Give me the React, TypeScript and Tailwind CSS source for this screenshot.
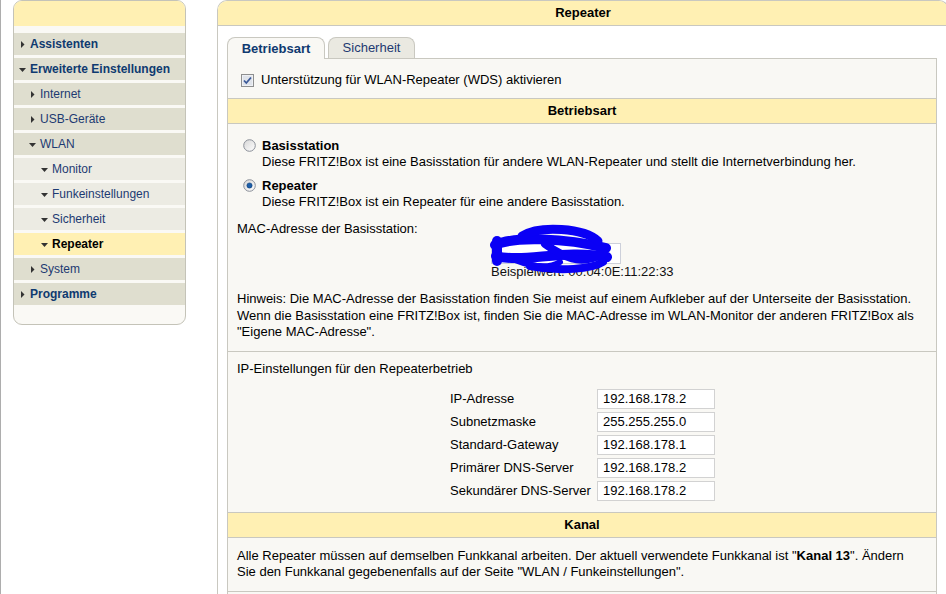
import React from 'react';

type MenuItem = { label: string; level: 1 | 2 | 3; open: boolean; active?: boolean };

const menu: MenuItem[] = [
  { label: 'Assistenten', level: 1, open: false },
  { label: 'Erweiterte Einstellungen', level: 1, open: true },
  { label: 'Internet', level: 2, open: false },
  { label: 'USB-Geräte', level: 2, open: false },
  { label: 'WLAN', level: 2, open: true },
  { label: 'Monitor', level: 3, open: true },
  { label: 'Funkeinstellungen', level: 3, open: true },
  { label: 'Sicherheit', level: 3, open: true },
  { label: 'Repeater', level: 3, open: true, active: true },
  { label: 'System', level: 2, open: false },
  { label: 'Programme', level: 1, open: false },
];

const ipRows = [
  ['IP-Adresse', '192.168.178.2'],
  ['Subnetzmaske', '255.255.255.0'],
  ['Standard-Gateway', '192.168.178.1'],
  ['Primärer DNS-Server', '192.168.178.2'],
  ['Sekundärer DNS-Server', '192.168.178.2'],
];

function Arrow({ open }: { open: boolean }) {
  return (
    <svg width="7" height="7" viewBox="0 0 7 7" className="shrink-0">
      {open ? <path d="M0 2 L7 2 L3.5 6 Z" fill="#333" /> : <path d="M2 0 L5.5 3.5 L2 7 Z" fill="#333" />}
    </svg>
  );
}

function Radio({ checked }: { checked: boolean }) {
  return (
    <svg width="13" height="13" viewBox="0 0 13 13" className="shrink-0">
      <defs>
        <linearGradient id={checked ? 'rg1' : 'rg0'} x1="0" y1="0" x2="1" y2="1">
          <stop offset="0" stopColor="#d6d6d6" />
          <stop offset="1" stopColor="#ffffff" />
        </linearGradient>
      </defs>
      <circle cx="6.5" cy="6.5" r="5.8" fill={`url(#${checked ? 'rg1' : 'rg0'})`} stroke="#8a8f98" strokeWidth="1" />
      {checked && <circle cx="6.5" cy="6.5" r="2.6" fill="#1d5fa8" stroke="#0c3d78" strokeWidth="0.6" />}
    </svg>
  );
}

function Checkbox() {
  return (
    <svg width="13" height="13" viewBox="0 0 13 13" className="shrink-0">
      <rect x="0.5" y="0.5" width="12" height="12" fill="#eef0f4" stroke="#8e8f8f" />
      <rect x="2" y="2" width="9" height="9" fill="#dfe3ea" />
      <path d="M3 6.5 L5.3 9 L10 3.5" fill="none" stroke="#3b5998" strokeWidth="1.8" />
    </svg>
  );
}

function SideMenu() {
  const pad = { 1: 'pl-[5px]', 2: 'pl-[15px]', 3: 'pl-[27px]' };
  return (
    <div className="w-[173px] h-[325px] border border-[#c4c3b8] rounded-[9px] bg-[#faf9f5] overflow-hidden">
      <div className="h-[25px] bg-[#fff0b3]" />
      <div className="flex flex-col gap-[3px] pt-[7px]">
        {menu.map((m) => {
          const bg = m.active ? 'bg-[#fff0b3]' : m.level === 3 ? 'bg-[#ecebe3]' : 'bg-[#dfdecf]';
          const txt = m.active
            ? 'font-bold text-black'
            : m.level === 1
            ? 'font-bold text-[#0f3a70]'
            : 'text-[#1d3a72]';
          return (
            <div key={m.label} className={`h-[22px] flex items-center gap-[4px] ${pad[m.level]} ${bg}`}>
              <Arrow open={m.open} />
              <span className={`text-[12px] leading-none ${txt}`}>{m.label}</span>
            </div>
          );
        })}
      </div>
    </div>
  );
}

export default function App() {
  return (
    <div className="w-[946px] h-[594px] overflow-hidden bg-white flex border-l border-[#adadad] font-['Liberation_Sans',Arial,sans-serif] text-[13px] text-black">
      <div className="pl-[12px] shrink-0">
        <SideMenu />
      </div>

      <div className="ml-[31px] w-[732px] shrink-0 border-l border-t border-r border-[#c9c8c0] rounded-t-[10px] overflow-hidden">
        <div className="h-[25px] bg-[#fff0b3] border-b border-[#c9c8c0] flex items-center justify-center font-bold">
          Repeater
        </div>

        <div className="pl-[9px] pr-[10px] pt-[11px]">
          <div className="flex gap-[3px] items-end">
            <div className="relative z-10 -mb-px h-[22px] w-[98px] border border-b-0 border-[#c9c8c0] rounded-t-[8px] bg-[#f9f8f4] flex items-center justify-center font-bold text-[#0f3a70]">
              Betriebsart
            </div>
            <div className="h-[21px] w-[87px] border border-b-0 border-[#c9c8c0] rounded-t-[8px] bg-[#eae9e1] flex items-center justify-center text-[#1d3a72]">
              Sicherheit
            </div>
          </div>

          <div className="w-[710px] border border-[#c9c8c0] bg-[#f9f8f4]">
            <div className="h-[39px] flex items-center pl-[13px] pt-[3px] gap-[7px]">
              <Checkbox />
              <span>Unterstützung für WLAN-Repeater (WDS) aktivieren</span>
            </div>

            <div className="h-[26px] bg-[#fff0b3] border-y border-[#c9c8c0] flex items-center justify-center font-bold">
              Betriebsart
            </div>

            <div className="pl-[9px] pr-[9px] leading-[16px]">
              <div className="mt-[14px] pl-[6px] flex gap-[6px]">
                <div className="pt-[1px]">
                  <Radio checked={false} />
                </div>
                <div>
                  <div className="font-bold">Basisstation</div>
                  <div>Diese FRITZ!Box ist eine Basisstation für andere WLAN-Repeater und stellt die Internetverbindung her.</div>
                </div>
              </div>
              <div className="mt-[8px] pl-[6px] flex gap-[6px]">
                <div className="pt-[1px]">
                  <Radio checked={true} />
                </div>
                <div>
                  <div className="font-bold">Repeater</div>
                  <div>Diese FRITZ!Box ist ein Repeater für eine andere Basisstation.</div>
                </div>
              </div>

              <div className="mt-[11px]">MAC-Adresse der Basisstation:</div>

              <div className="relative ml-[254px] mt-[6px]">
                <div className="w-[130px] h-[21px] bg-white border border-[#cdd0da]" />
                <div className="text-[#111]">Beispielwert: 00:04:0E:11:22:33</div>
                <svg
                  className="absolute left-[-5px] top-[-21px]"
                  width="130"
                  height="52"
                  viewBox="486 222 130 52"
                >
                  <g fill="none" stroke="#0a00f5" strokeLinecap="round" strokeLinejoin="round">
                    <path d="M495 245 C515 236 565 238 606 248" strokeWidth="10" />
                    <path d="M522 236 C540 225 584 228 598 241" strokeWidth="9" />
                    <path d="M496 256 C522 263 565 249 607 257" strokeWidth="10" />
                    <path d="M530 266 C560 272 592 269 603 262" strokeWidth="8" />
                    <path d="M497 241 L497 261" strokeWidth="10" />
                    <path d="M545 244 C570 262 585 264 604 253" strokeWidth="8" />
                    <path d="M515 260 C535 268 550 268 560 262" strokeWidth="6" />
                  </g>
                </svg>
              </div>

              <div className="mt-[11px] leading-[16.5px]">
                Hinweis: Die MAC-Adresse der Basisstation finden Sie meist auf einem Aufkleber auf der Unterseite der Basisstation.
                <br />
                Wenn die Basisstation eine FRITZ!Box ist, finden Sie die MAC-Adresse im WLAN-Monitor der anderen FRITZ!Box als
                <br />
                "Eigene MAC-Adresse".
              </div>
            </div>

            <div className="mt-[10px] border-t border-[#c9c8c0] pl-[9px] pt-[9px]">
              <div className="leading-[16px]">IP-Einstellungen für den Repeaterbetrieb</div>
              <div className="mt-[12px] ml-[213px] flex flex-col gap-[3px]">
                {ipRows.map(([label, value]) => (
                  <div key={label} className="flex items-center h-[20px]">
                    <span className="w-[147px]">{label}</span>
                    <div className="w-[118px] h-[20px] bg-white border border-[#d2d2d2] flex items-center pl-[5px]">
                      {value}
                    </div>
                  </div>
                ))}
              </div>
            </div>

            <div className="mt-[11px] h-[26px] bg-[#fff0b3] border-y border-[#c9c8c0] flex items-center justify-center font-bold">
              Kanal
            </div>

            <div className="pl-[9px] pt-[10px] pb-[10px] leading-[16.5px]">
              Alle Repeater müssen auf demselben Funkkanal arbeiten. Der aktuell verwendete Funkkanal ist "<b>Kanal 13</b>". Ändern
              <br />
              Sie den Funkkanal gegebenenfalls auf der Seite "WLAN / Funkeinstellungen".
            </div>
            <div className="border-t border-[#c9c8c0] h-[40px]" />
          </div>
        </div>
      </div>
    </div>
  );
}
